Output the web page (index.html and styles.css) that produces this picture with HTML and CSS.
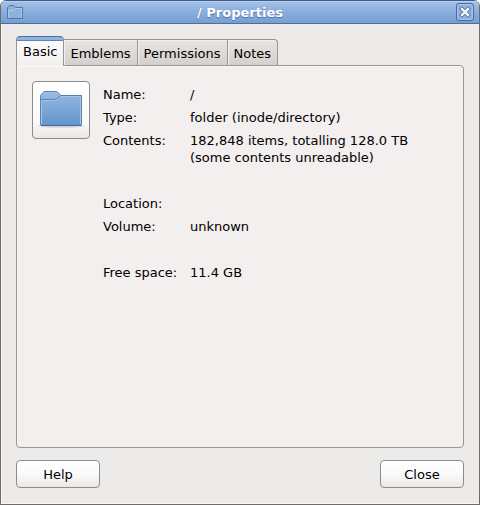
FILE: index.html
```html
<!DOCTYPE html>
<html lang="en">
<head>
  <meta charset="UTF-8">
  <meta name="viewport" content="width=device-width, initial-scale=1.0">
  <title>/ Properties</title>
  <link rel="stylesheet" href="styles.css">
</head>
<body>
<div class="window">
  <header class="titlebar">
    <svg class="title-icon" width="18" height="16" viewBox="0 0 18 16">
      <path d="M1.500 14.500V3.500L3.500 1.500H7.500L9.500 3.500H16.500V14.500Z" fill="#8fb2dd" stroke="#4f76ad"/>
      <path d="M2.500 13.500V6.500H7.500L9.500 4.500H15.500V13.500" fill="none" stroke="#b3cbeb"/>
    </svg>
    <h1 class="title">/ Properties</h1>
    <button class="close-window" type="button" aria-label="Close window">
      <svg width="12" height="12" viewBox="0 0 12 12">
        <path d="M3 3L9 9M9 3L3 9" stroke="#41659a" stroke-width="4" stroke-linecap="square"/>
        <path d="M3 3L9 9M9 3L3 9" stroke="#eef4fc" stroke-width="2.500" stroke-linecap="square"/>
      </svg>
    </button>
  </header>
  <main class="content">
    <div class="tabs" role="tablist">
      <button class="tab active" type="button" role="tab" aria-selected="true">Basic</button>
      <button class="tab" type="button" role="tab">Emblems</button>
      <button class="tab" type="button" role="tab">Permissions</button>
      <button class="tab" type="button" role="tab">Notes</button>
    </div>
    <section class="panel" role="tabpanel">
      <button class="icon-button" type="button" aria-label="Folder icon">
        <svg width="48" height="48" viewBox="0 0 48 48">
          <defs>
            <linearGradient id="back" x1="0" y1="0" x2="0" y2="1">
              <stop offset="0" stop-color="#9dbfe6"/>
              <stop offset="1" stop-color="#5c8cc4"/>
            </linearGradient>
            <linearGradient id="front" x1="0" y1="0" x2="0" y2="1">
              <stop offset="0" stop-color="#91b5df"/>
              <stop offset="1" stop-color="#6494cc"/>
            </linearGradient>
          </defs>
          <ellipse cx="24" cy="40" rx="23" ry="2" fill="#d5d9df"/>
          <path d="M3.500 38V9.500L7 5.500H20L24 9.500H44.500V38Z" fill="url(#back)" stroke="#6486b2" stroke-linejoin="round"/>
          <path d="M3.500 14.500Q3.500 13.500 5 13.500H17Q20 13.500 22 11L23.500 9.500H44.500V38.500Q44.500 39.500 43 39.500H5Q3.500 39.500 3.500 38Z" fill="url(#front)" stroke="#5b80b0"/>
          <path d="M4.500 38V14.500H18Q21 14.500 24 10.500H43.500V38" fill="none" stroke="#a5c4e8"/>
          <path d="M4 39.500H44" stroke="#3f6898"/>
        </svg>
      </button>
      <div class="details">
        <dl class="group">
          <dt>Name:</dt><dd>/</dd>
          <dt>Type:</dt><dd>folder (inode/directory)</dd>
          <dt>Contents:</dt><dd>182,848 items, totalling 128.0 TB<br>(some contents unreadable)</dd>
        </dl>
        <dl class="group">
          <dt>Location:</dt><dd></dd>
          <dt>Volume:</dt><dd>unknown</dd>
        </dl>
        <dl class="group">
          <dt>Free space:</dt><dd>11.4 GB</dd>
        </dl>
      </div>
    </section>
    <footer class="actions">
      <button class="btn" type="button">Help</button>
      <button class="btn" type="button">Close</button>
    </footer>
  </main>
</div>
</body>
</html>
```
FILE: styles.css
```css
* {
  box-sizing: border-box;
}
body {
  margin: 0;
  background: #fff;
  color: #000;
  font: 13px/17px "DejaVu Sans", sans-serif;
}
button {
  margin: 0;
  padding: 0;
  color: inherit;
  font: inherit;
}
.window {
  display: flex;
  flex-direction: column;
  min-height: 100vh;
  background: #edebea;
  border: 1px solid #6f6c6a;
  border-top: 0;
  border-radius: 6px 6px 0 0;
  overflow: hidden;
}

/* title bar */
.titlebar {
  display: flex;
  align-items: center;
  height: 24px;
  padding: 0 5px;
  background: linear-gradient(#a5c2e8, #8fb1de 40%, #769fd2);
  border-top: 1px solid #3c5d8c;
  border-bottom: 1px solid #4b6e9f;
  box-shadow: inset 0 1px #b9d0ef;
}
.title-icon {
  display: block;
}
.title {
  flex: 1;
  margin: 0;
  color: #fff;
  font-size: 13px;
  font-weight: bold;
  text-align: center;
  text-shadow: 0 1px 1px #4a70a5;
}
.close-window {
  display: grid;
  place-items: center;
  width: 18px;
  height: 18px;
  background: #8fb2df;
  border: 1px solid #456b9f;
  border-radius: 3px;
  box-shadow: inset 0 0 0 1px #a8c5eb;
}

.content {
  display: flex;
  flex: 1;
  flex-direction: column;
  padding: 12px 15px 16px;
  box-shadow: inset 1px -1px #f8f7f6;
}

/* tabs */
.tabs {
  display: flex;
  align-items: flex-end;
}
.tab {
  height: 26px;
  padding: 1px 6px 0;
  background: linear-gradient(#e7e4e2, #d3d0ce);
  border: 1px solid #999592;
  border-left: 0;
  border-bottom: 0;
  box-shadow: inset 1px 1px #f3f1f0;
}
.tab:last-child {
  border-radius: 0 4px 0 0;
}
.tab.active {
  z-index: 1;
  height: 30px;
  margin-bottom: -1px;
  padding: 0 6px;
  background: linear-gradient(#8db2e2 3px, #5f84b4 3px, #5f84b4 4px, #fcfbfb 4px, #f2efee);
  border-left: 1px solid #999592;
  border-top-color: #4c719f;
  border-radius: 4px 4px 0 0;
  box-shadow: none;
}

.panel {
  display: flex;
  flex: 1;
  align-items: flex-start;
  gap: 13px;
  padding: 15px;
  background: #f2efee;
  border: 1px solid #999592;
  border-radius: 0 4px 4px 4px;
  box-shadow: inset 1px 1px #faf9f8;
}
.icon-button {
  display: grid;
  flex: none;
  place-items: center;
  width: 58px;
  height: 58px;
  background: linear-gradient(#fff, #fbfafa 70%, #ebe8e6);
  border: 1px solid #8f8b88;
  border-radius: 4px;
}
.details {
  display: flex;
  flex: 1;
  flex-direction: column;
  gap: 29px;
  padding-top: 5px;
}
.group {
  display: grid;
  grid-template-columns: 75px 1fr;
  gap: 6px 12px;
  margin: 0;
  white-space: nowrap;
}
.group dd {
  margin: 0;
}

/* bottom buttons */
.actions {
  display: flex;
  justify-content: space-between;
  padding: 12px 0 0;
}
.btn {
  width: 84px;
  height: 28px;
  background: linear-gradient(#fff, #fbfafa 50%, #ebe8e6);
  border: 1px solid #8f8b88;
  border-radius: 4px;
}
```
